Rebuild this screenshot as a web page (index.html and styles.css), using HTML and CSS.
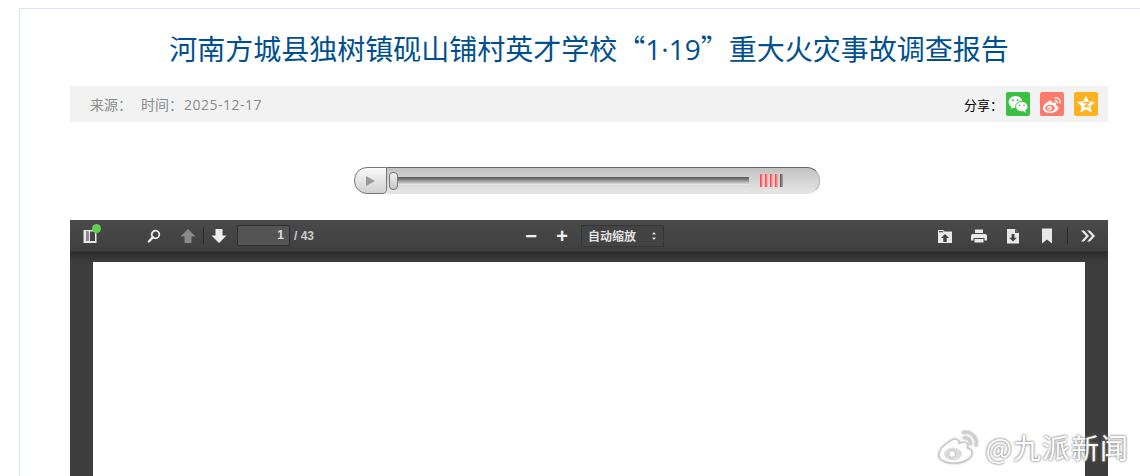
FILE: index.html
```html
<!DOCTYPE html>
<html lang="zh-CN">
<head>
    <meta charset="UTF-8">
    <meta name="viewport" content="width=device-width, initial-scale=1.0">
    <title>河南方城县独树镇砚山铺村英才学校“1·19”重大火灾事故调查报告</title>
    <link rel="stylesheet" href="styles.css">
</head>
<body>
    <div class="card">
        <h1 class="title">河南方城县独树镇砚山铺村英才学校“<span class="latin">1·19</span>”重大火灾事故调查报告</h1>

        <div class="info-bar">
            <span class="info-source">来源：</span>
            <span class="info-time">时间：<span class="latin date">2025-12-17</span></span>
            <div class="share">
                <span class="share-label">分享：</span>
                <a class="share-btn wechat">
                    <svg viewBox="0 0 24 24" width="24" height="24">
                        <ellipse cx="9.5" cy="10" rx="7" ry="6" fill="#fff"/>
                        <path d="M5.5 14l-.8 3 3-1.6z" fill="#fff"/>
                        <ellipse cx="15.8" cy="14.6" rx="6.2" ry="5.2" fill="#fff" stroke="#3cc044" stroke-width="1"/>
                        <path d="M19 18.5l1.2 2.2-3-1.2z" fill="#fff"/>
                        <circle cx="7" cy="8.2" r="1" fill="#3cc044"/>
                        <circle cx="11.6" cy="8.2" r="1" fill="#3cc044"/>
                        <circle cx="13.6" cy="13.4" r=".8" fill="#3cc044"/>
                        <circle cx="18" cy="13.4" r=".8" fill="#3cc044"/>
                    </svg>
                </a>
                <a class="share-btn weibo">
                    <svg viewBox="0 0 24 24" width="24" height="24">
                        <path d="M10.5 8.5c-3.500 1-7.500 4.600-7.500 8 0 2.700 3.500 4.500 7.300 4.500 4.800 0 8.200-2.800 8.200-5 0-1.700-1.500-2.300-2.500-2.600.7-1.700.2-2.800-1.800-2.800-1 0-2.200.5-2.200.5s.6-2.300-1.500-2.600z" fill="#fff"/>
                        <ellipse cx="10" cy="16.200" rx="4.800" ry="3.400" fill="#fc7a6c"/>
                        <circle cx="9.500" cy="16.300" r="2.300" fill="#fff"/>
                        <circle cx="9.200" cy="16.500" r="1" fill="#fc7a6c"/>
                        <path d="M15 6c3-.7 5.800 1.800 5 5.200M15.200 8.800c1.500-.3 2.600.9 2.200 2.400" fill="none" stroke="#fff" stroke-width="1.300" stroke-linecap="round"/>
                    </svg>
                </a>
                <a class="share-btn qzone">
                    <svg viewBox="0 0 24 24" width="24" height="24">
                        <path d="M12 3.500l2.700 5.700 6.300.8-4.600 4.300 1.200 6.200-5.600-3-5.600 3 1.200-6.200L3 10l6.300-.8z" fill="#fff"/>
                        <path d="M9 10.500h6l-4 4h4.500" fill="none" stroke="#fdb120" stroke-width="1.400"/>
                    </svg>
                </a>
            </div>
        </div>

        <div class="player">
            <div class="player-play"><span class="play-arrow"></span></div>
            <div class="player-track">
                <span class="thumb"></span>
                <span class="groove"></span>
                <div class="volume">
                    <span class="vol-bar"></span>
                    <span class="vol-bar"></span>
                    <span class="vol-bar"></span>
                    <span class="vol-bar"></span>
                    <span class="vol-bar off"></span>
                </div>
            </div>
        </div>

        <div class="viewer">
            <div class="toolbar">
                <div class="tool-left">
                    <div class="sidebar-toggle">
                        <svg viewBox="0 0 16 16" width="16" height="16">
                            <path d="M1.500 2h13v13h-13z M4 3.500v9.500h2.500V3.500z M8 3.500v9.500h5V3.500z" fill="#e8e8e8" fill-rule="evenodd"/>
                            <path d="M4 3.500h2.500v9.500H4z" fill="#8a8a8a"/>
                        </svg>
                        <span class="green-dot"></span>
                    </div>
                    <svg class="tool-search" viewBox="0 0 16 16" width="16" height="16">
                        <circle cx="9.500" cy="6.500" r="3.800" fill="none" stroke="#eee" stroke-width="1.800"/>
                        <path d="M6.800 9.400L2.800 13.500" stroke="#eee" stroke-width="2.400" stroke-linecap="round"/>
                    </svg>
                    <svg class="tool-up" viewBox="0 0 16 16" width="16" height="16">
                        <path d="M8 1l7.500 7.500H11.500v6.500h-7V8.500H.5z" fill="#8a8a8a"/>
                    </svg>
                    <span class="tool-sep"></span>
                    <svg class="tool-down" viewBox="0 0 16 16" width="16" height="16">
                        <path d="M8 15l7.500-7.500H11.500V1h-7v6.500H.5z" fill="#eee"/>
                    </svg>
                    <span class="page-input">1</span>
                    <span class="page-count">/ 43</span>
                </div>
                <div class="tool-center">
                    <span class="zoom-btn">−</span>
                    <span class="zoom-sep"></span>
                    <span class="zoom-btn">+</span>
                    <div class="zoom-select">
                        <span>自动缩放</span>
                        <svg viewBox="0 0 6 10" width="6" height="10"><path d="M3 1l2 2.500H1zM3 9L1 6.500h4z" fill="#ddd"/></svg>
                    </div>
                </div>
                <div class="tool-right">
                    <svg viewBox="0 0 16 16" width="16" height="16">
                        <path d="M1 2h5.500l1 1.500H15V15H1z" fill="#e8e8e8"/>
                        <path d="M2 3h4l.6 1.200H2z" fill="#555"/>
                        <path d="M8 6l4 4H9.700v4H6.300v-4H4z" fill="#444"/>
                    </svg>
                    <svg viewBox="0 0 16 16" width="16" height="16">
                        <path d="M4 1.500h8V5H4z" fill="#e8e8e8"/>
                        <path d="M2 6h12a2 2 0 0 1 2 2v4.500h-2.500V10h-11v2.500H0V8a2 2 0 0 1 2-2z" fill="#e8e8e8"/>
                        <path d="M3.500 11h9v3.500h-9z" fill="#e8e8e8"/>
                    </svg>
                    <svg viewBox="0 0 16 16" width="16" height="16">
                        <path d="M2 1h8l4 4v10.500H2z" fill="#e8e8e8"/>
                        <path d="M10 1v4h4z" fill="#555"/>
                        <path d="M8 13.500l-3.800-3.800h2.400V6h2.800v3.700h2.400z" fill="#444"/>
                    </svg>
                    <svg viewBox="0 0 16 16" width="16" height="16">
                        <path d="M3 .5h10v15l-5-4-5 4z" fill="#e8e8e8"/>
                    </svg>
                    <span class="tool-sep right-sep"></span>
                    <svg viewBox="0 0 16 16" width="16" height="16">
                        <path d="M1 2.500h3L9 8l-5 5.500H1L6 8zM7 2.500h3L15 8l-5 5.500H7L12 8z" fill="#e8e8e8"/>
                    </svg>
                </div>
            </div>
            <div class="toolbar-shadow"></div>
            <div class="page"></div>
        </div>
    </div>

    <div class="watermark">
        <svg class="watermark-logo" viewBox="0 0 42 34" width="42" height="34">
            <path d="M16 9C9 12 1 19 1 25c0 5 7 8 15 8 10 0 18-5 18-10 0-3-3-4.500-5-5 1.500-3.500.5-5.500-3-5.500-2 0-5 1-5 1s1-4.500-5-4.500z" fill="#fff" stroke="#c4c4c4" stroke-width="1.200"/>
            <ellipse cx="15" cy="24" rx="9" ry="6.500" fill="#ddd"/>
            <circle cx="14" cy="24" r="3.500" fill="#fff" stroke="#bbb"/>
            <path d="M25 2.500c7-2 15 4 13 13M26 8c3.500-1 7.500 2 6.500 6" fill="none" stroke="#d0d0d0" stroke-width="2.500" stroke-linecap="round"/>
        </svg>
        <span class="watermark-text">@九派新闻</span>
    </div>
</body>
</html>
```

FILE: styles.css
```css
* {
    box-sizing: border-box;
}
html, body {
    margin: 0;
    height: 476px;
    overflow: hidden;
    background: #fff;
}
body {
    position: relative;
    font-family: "Noto Sans CJK SC", "Liberation Sans", sans-serif;
}
.card {
    margin: 8px 0 0 19px;
    height: 468px;
    overflow: hidden;
    border-top: 1px solid #d9e5f8;
    border-left: 1px solid #d9e5f8;
    padding-left: 50px;
}
.latin {
    font-family: "Open Sans", "Liberation Sans", sans-serif;
}

/* title */
.title {
    width: 1038px;
    margin: 0;
    padding-top: 19px;
    height: 77px;
    text-align: center;
    font-size: 28px;
    line-height: 40px;
    font-weight: 400;
    color: #00508f;
    white-space: nowrap;
}

/* info bar */
.info-bar {
    width: 1038px;
    height: 36px;
    padding: 0 10px 1px 20px;
    display: flex;
    align-items: center;
    background: #f2f2f2;
    font-size: 14px;
    color: #8c8c8c;
}
.info-source {
    margin-right: 9px;
}
.date {
    margin-left: 1px;
    letter-spacing: .5px;
}
.share {
    margin: 1px 0 0 auto;
    display: flex;
    align-items: center;
    gap: 10px;
}
.share-label {
    font-size: 13px;
    color: #000;
    margin-right: -7px;
}
.share-btn {
    display: block;
    width: 24px;
    height: 24px;
    border-radius: 2px;
}
.share-btn svg {
    display: block;
}
.wechat { background: #3cc044; }
.weibo { background: #fc7a6c; }
.qzone { background: #fdb120; }

/* audio player */
.player {
    width: 466px;
    height: 27px;
    margin: 45px 0 26px 284px;
    display: flex;
}
.player-play {
    width: 33px;
    height: 27px;
    display: flex;
    align-items: center;
    justify-content: center;
    border: 1px solid #777;
    border-radius: 13px 0 4px 13px;
    background: linear-gradient(#fafafa, #d0d0d0);
}
.play-arrow {
    width: 0;
    height: 0;
    border-left: 9px solid #999;
    border-top: 5px solid transparent;
    border-bottom: 5px solid transparent;
}
.player-track {
    flex: 1;
    height: 27px;
    display: flex;
    align-items: center;
    padding-left: 2px;
    border-top: 1px solid #666;
    border-right: 1px solid #aaa;
    border-bottom: 1px solid #ddd;
    border-radius: 0 13px 13px 0;
    background: linear-gradient(#c2c2c2, #e6e6e6);
}
.thumb {
    width: 9px;
    height: 18px;
    border: 1px solid #777;
    border-radius: 4px;
    background: linear-gradient(#f4f4f4, #c4c4c4);
}
.groove {
    width: 351px;
    height: 8px;
    background: linear-gradient(#555, #aaa 60%, #eee);
}
.volume {
    display: flex;
    gap: 2px;
    margin-left: 11px;
}
.vol-bar {
    width: 3px;
    height: 13px;
    background: linear-gradient(90deg, #f33, #fbb);
}
.vol-bar.off {
    background: linear-gradient(90deg, #555, #aaa);
}

/* pdf viewer */
.viewer {
    width: 1038px;
    height: 256px;
    background-color: #3d3d3d;
}
.toolbar {
    height: 32px;
    display: flex;
    align-items: center;
    padding: 0 12px;
    background: linear-gradient(#4a4a4a, #3f3f3f);
    border-bottom: 1px solid #333;
    color: #e0e0e0;
    font-size: 12px;
}
.toolbar-shadow {
    height: 10px;
    background: linear-gradient(#2c2c2c, rgba(61, 61, 61, 0));
}
.page {
    width: 992px;
    height: 214px;
    margin-left: 23px;
    background: #fff;
}
.toolbar svg {
    display: block;
    flex: none;
}
.tool-left {
    width: 443px;
    flex: none;
    display: flex;
    align-items: center;
}
.sidebar-toggle {
    position: relative;
    width: 16px;
    height: 16px;
}
.green-dot {
    position: absolute;
    top: -4px;
    left: 10px;
    width: 9px;
    height: 9px;
    border-radius: 50%;
    background: #5fd04e;
}
.tool-search { margin-left: 48px; }
.tool-up { margin-left: 18px; }
.tool-sep {
    width: 1px;
    height: 17px;
    margin-left: 7px;
    background: #2b2b2b;
}
.tool-down { margin-left: 7px; }
.page-input {
    width: 53px;
    height: 21px;
    margin-left: 10px;
    padding-right: 5px;
    text-align: right;
    line-height: 19px;
    font-family: "Liberation Sans", sans-serif;
    font-weight: 700;
    border: 1px solid #2f2f2f;
    border-radius: 2px;
    background: #545454;
}
.page-count {
    margin-left: 4px;
    font-family: "Liberation Sans", sans-serif;
    font-weight: 700;
    color: #ccc;
}
.tool-center {
    display: flex;
    align-items: center;
}
.zoom-btn {
    width: 12px;
    text-align: center;
    font-family: "Liberation Sans", sans-serif;
    font-size: 20px;
    line-height: 20px;
    font-weight: 700;
    color: #eee;
}
.zoom-sep {
    width: 1px;
    height: 20px;
    margin: 0 9px;
    background: #444;
}
.zoom-select {
    width: 83px;
    height: 22px;
    margin-left: 13px;
    padding: 0 6px;
    display: flex;
    align-items: center;
    justify-content: space-between;
    border: 1px solid #363636;
    background: #434343;
    font-size: 12px;
    font-weight: 700;
}
.tool-right {
    margin-left: auto;
    display: flex;
    align-items: center;
    gap: 18px;
}
.right-sep {
    margin: 0 -6px;
}

/* watermark over the page */
.watermark {
    position: absolute;
    right: 11px;
    top: 429px;
    display: flex;
    align-items: center;
    gap: 6px;
}
.watermark-logo {
    margin-left: -3px;
    filter: drop-shadow(0 0 1px #aaa);
}
.watermark-text {
    font-size: 28px;
    line-height: 36px;
    letter-spacing: 1px;
    color: #fff;
    text-shadow: 0 0 2px #777, 0 0 3px #999;
    white-space: nowrap;
}
```
